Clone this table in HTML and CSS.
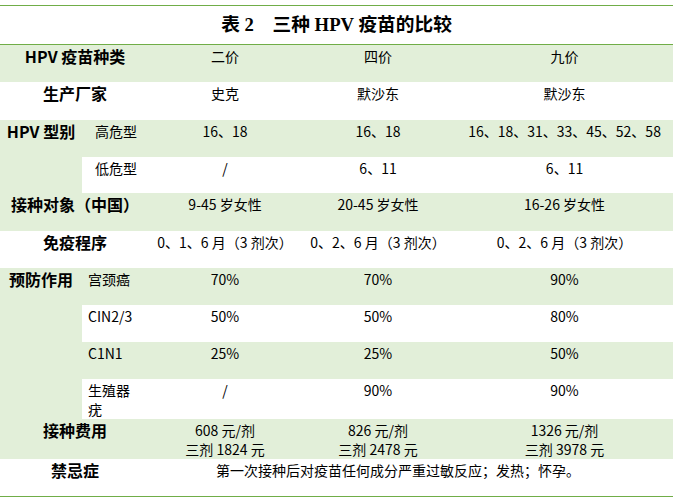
FILE: index.html
```html
<!DOCTYPE html>
<html lang="zh-CN">
<head>
<meta charset="utf-8">
<title>表 2 三种 HPV 疫苗的比较</title>
<link rel="stylesheet" href="styles.css">
</head>
<body>
<div class="sheet">
  <div class="title">表 2　三种 HPV 疫苗的比较</div>
  <table class="grid">
    <colgroup>
      <col class="c0"><col class="c1"><col class="c2"><col class="c3"><col class="c4">
    </colgroup>
    <tr class="g h37">
      <td class="lbl" colspan="2">HPV 疫苗种类</td>
      <td class="v">二价</td><td class="v">四价</td><td class="v">九价</td>
    </tr>
    <tr class="h38">
      <td class="lbl" colspan="2">生产厂家</td>
      <td class="v">史克</td><td class="v">默沙东</td><td class="v">默沙东</td>
    </tr>
    <tr class="g h37">
      <td class="lbl g" rowspan="2">HPV 型别</td>
      <td class="sub wide">高危型</td>
      <td class="v">16、18</td><td class="v">16、18</td><td class="v">16、18、31、33、45、52、58</td>
    </tr>
    <tr class="h36">
      <td class="sub wide">低危型</td>
      <td class="v">/</td><td class="v">6、11</td><td class="v">6、11</td>
    </tr>
    <tr class="g h38">
      <td class="lbl" colspan="2">接种对象（中国）</td>
      <td class="v">9-45 岁女性</td><td class="v">20-45 岁女性</td><td class="v">16-26 岁女性</td>
    </tr>
    <tr class="h37">
      <td class="lbl" colspan="2">免疫程序</td>
      <td class="v">0、1、6 月（3 剂次）</td><td class="v">0、2、6 月（3 剂次）</td><td class="v">0、2、6 月（3 剂次）</td>
    </tr>
    <tr class="g h37">
      <td class="lbl g" rowspan="4">预防作用</td>
      <td class="sub">宫颈癌</td>
      <td class="v">70%</td><td class="v">70%</td><td class="v">90%</td>
    </tr>
    <tr class="h37">
      <td class="sub">CIN2/3</td>
      <td class="v">50%</td><td class="v">50%</td><td class="v">80%</td>
    </tr>
    <tr class="g h37">
      <td class="sub">C1N1</td>
      <td class="v">25%</td><td class="v">25%</td><td class="v">50%</td>
    </tr>
    <tr class="h40">
      <td class="sub">生殖器<br>疣</td>
      <td class="v">/</td><td class="v">90%</td><td class="v">90%</td>
    </tr>
    <tr class="g h39">
      <td class="lbl" colspan="2">接种费用</td>
      <td class="v">608 元/剂<br>三剂 1824 元</td><td class="v">826 元/剂<br>三剂 2478 元</td><td class="v">1326 元/剂<br>三剂 3978 元</td>
    </tr>
    <tr class="h37">
      <td class="lbl" colspan="2">禁忌症</td>
      <td class="note" colspan="3">第一次接种后对疫苗任何成分严重过敏反应；发热；怀孕。</td>
    </tr>
  </table>
</div>
</body>
</html>
```

FILE: styles.css
```css
html, body {
  margin: 0;
  padding: 0;
  background: #ffffff;
}

body {
  font-family: "Noto Sans CJK SC", "Noto Sans", sans-serif;
  font-size: 14px;
  color: #000000;
}

.sheet {
  width: 673px;
  margin-top: 5px;
  border-top: 1px solid #70ad47;
}

.title {
  height: 39px;
  box-sizing: border-box;
  padding-top: 7px;
  line-height: 24px;
  text-align: center;
  font-family: "Liberation Serif", "Noto Sans CJK SC", serif;
  font-weight: bold;
  font-size: 18.7px;
  border-bottom: 1px solid #70ad47;
}

.grid {
  width: 673px;
  border-collapse: collapse;
  table-layout: fixed;
  border-bottom: 1px solid #70ad47;
}

.c0 { width: 82px; }
.c1 { width: 68px; }
.c2 { width: 150px; }
.c3 { width: 156px; }
.c4 { width: 217px; }

.grid td {
  padding: 2px 0 0 0;
  vertical-align: top;
  line-height: 19px;
  white-space: nowrap;
}

.g { background: #e2efd9; }

.h36 { height: 36px; }
.h37 { height: 37px; }
.h38 { height: 38px; }
.h39 { height: 39px; }
.h40 { height: 40px; }

.grid td.lbl {
  text-align: center;
  font-weight: bold;
  font-size: 16px;
}

.grid td.sub {
  padding-left: 6px;
}

.grid td.sub.wide {
  padding-left: 13px;
}

.grid td.v {
  text-align: center;
}

.grid td.note {
  padding-left: 66px;
}
```
